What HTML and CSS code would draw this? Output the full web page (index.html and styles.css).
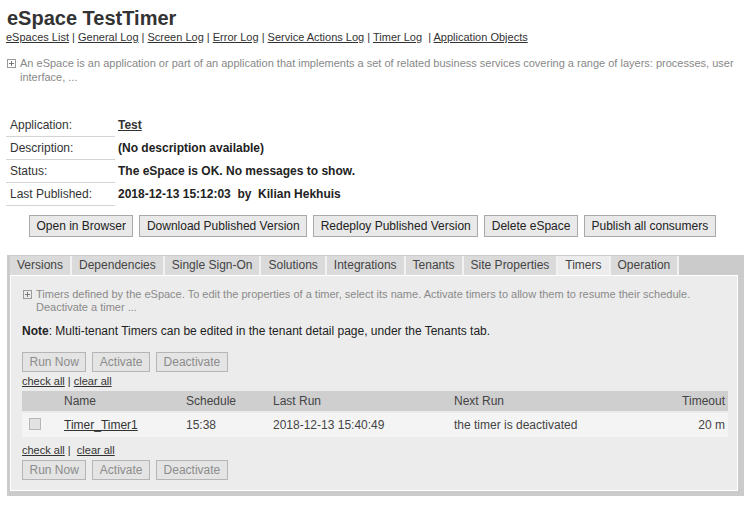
FILE: index.html
```html
<!DOCTYPE html>
<html>
<head>
<meta charset="utf-8">
<title>eSpace TestTimer</title>
<link rel="stylesheet" href="styles.css">
</head>
<body>
<h1 class="title">eSpace TestTimer</h1>
<div class="navlinks"><a href="#">eSpaces List</a> | <a href="#">General Log</a> | <a href="#">Screen Log</a> | <a href="#">Error Log</a> | <a href="#">Service Actions Log</a> | <a href="#">Timer Log</a> &nbsp;| <a href="#">Application Objects</a></div>
<div class="desc">
  <svg class="plus" width="9" height="9" viewBox="0 0 9 9"><rect x="0.5" y="0.5" width="8" height="8" fill="none" stroke="#9a9a9a"/><path d="M2 4.5h5M4.5 2v5" stroke="#777"/></svg>
  <span class="desc-text">An eSpace is an application or part of an application that implements a set of related business services covering a range of layers: processes, user interface, ...</span>
</div>

<div class="info">
  <div class="info-label">Application:</div><div class="info-value"><a href="#">Test</a></div>
  <div class="info-label">Description:</div><div class="info-value">(No description available)</div>
  <div class="info-label">Status:</div><div class="info-value">The eSpace is OK. No messages to show.</div>
  <div class="info-label">Last Published:</div><div class="info-value">2018-12-13 15:12:03 &nbsp;by &nbsp;Kilian Hekhuis</div>
</div>

<div class="actions">
  <button class="btn">Open in Browser</button>
  <button class="btn">Download Published Version</button>
  <button class="btn">Redeploy Published Version</button>
  <button class="btn">Delete eSpace</button>
  <button class="btn">Publish all consumers</button>
</div>

<div class="panel">
  <div class="tabbar">
    <div class="tab">Versions</div>
    <div class="tab">Dependencies</div>
    <div class="tab">Single Sign-On</div>
    <div class="tab">Solutions</div>
    <div class="tab">Integrations</div>
    <div class="tab">Tenants</div>
    <div class="tab">Site Properties</div>
    <div class="tab active">Timers</div>
    <div class="tab">Operation</div>
  </div>
  <div class="tab-content">
    <div class="hint">
      <svg class="plus" width="9" height="9" viewBox="0 0 9 9"><rect x="0.5" y="0.5" width="8" height="8" fill="none" stroke="#9a9a9a"/><path d="M2 4.5h5M4.5 2v5" stroke="#777"/></svg>
      <span class="hint-text">Timers defined by the eSpace. To edit the properties of a timer, select its name. Activate timers to allow them to resume their schedule. Deactivate a timer ...</span>
    </div>
    <div class="note"><b>Note</b>: Multi-tenant Timers can be edited in the tenant detail page, under the Tenants tab.</div>
    <div class="small-actions first">
      <button class="btn-dis" disabled>Run Now</button>
      <button class="btn-dis" disabled>Activate</button>
      <button class="btn-dis" disabled>Deactivate</button>
    </div>
    <div class="checks"><a href="#">check all</a> | <a href="#">clear all</a></div>
    <div class="grid head">
      <div class="cell"></div>
      <div class="cell">Name</div>
      <div class="cell">Schedule</div>
      <div class="cell">Last Run</div>
      <div class="cell">Next Run</div>
      <div class="cell right">Timeout</div>
    </div>
    <div class="grid row">
      <div class="cell"><span class="chk"></span></div>
      <div class="cell"><a href="#">Timer_Timer1</a></div>
      <div class="cell">15:38</div>
      <div class="cell">2018-12-13 15:40:49</div>
      <div class="cell">the timer is deactivated</div>
      <div class="cell right">20 m</div>
    </div>
    <div class="checks second"><a href="#">check all</a> | &nbsp;<a href="#">clear all</a></div>
    <div class="small-actions">
      <button class="btn-dis" disabled>Run Now</button>
      <button class="btn-dis" disabled>Activate</button>
      <button class="btn-dis" disabled>Deactivate</button>
    </div>
  </div>
</div>
</body>
</html>
```

FILE: styles.css
```css
body {
  margin: 0;
  font-family: "Liberation Sans", Arial, sans-serif;
  color: #333;
  background: #fff;
}

a {
  color: #333;
  text-decoration: underline;
}

.title {
  margin: 0;
  padding: 6px 0 0 7px;
  font-size: 20px;
  line-height: 24px;
  font-weight: bold;
  color: #333;
}

.navlinks {
  margin-top: 1px;
  padding-left: 6px;
  font-size: 11px;
  line-height: 13px;
  color: #333;
}

.desc {
  display: flex;
  align-items: flex-start;
  gap: 4px;
  margin-top: 12px;
  padding-left: 7px;
  font-size: 11px;
  line-height: 14px;
  color: #888;
}

.plus {
  flex: none;
  margin-top: 3px;
}

.desc-text {
  max-width: 720px;
}

.info {
  display: grid;
  grid-template-columns: 109px auto;
  justify-content: start;
  margin-top: 30px;
  padding-left: 6px;
  font-size: 12px;
}

.info-label {
  padding-left: 4px;
  line-height: 22px;
  border-bottom: 1px solid #d4d4d4;
  color: #333;
}

.info-value {
  padding-left: 3px;
  line-height: 22px;
  font-weight: bold;
  color: #222;
}

.actions {
  display: flex;
  gap: 6px;
  margin-top: 9px;
  padding-left: 29px;
}

.btn {
  height: 22px;
  padding: 0 6.5px;
  font-family: "Liberation Sans", Arial, sans-serif;
  font-size: 12px;
  color: #222;
  background: #e9e9e9;
  border: 1px solid #a9a9a9;
  border-radius: 0;
}

.panel {
  margin: 18px 12px 0 7px;
  padding: 1px 6px 5px 3px;
  background: #cbcbcc;
}

.tabbar {
  display: flex;
  height: 19px;
}

.tab {
  padding: 0 7px;
  font-size: 12px;
  line-height: 19px;
  color: #444;
  background: #dadada;
  border-right: 2px solid #f1f1f1;
}

.tab.active {
  background: #ececec;
  color: #444;
}

.tab-content {
  background: #ececec;
  border: 1px solid #fff;
  padding: 12px 9px 10px 11px;
}

.hint {
  display: flex;
  align-items: flex-start;
  gap: 4px;
  padding-left: 1px;
  font-size: 11px;
  line-height: 13px;
  color: #8a8a8a;
}

.hint .plus {
  margin-top: 2px;
}

.hint-text {
  max-width: 690px;
}

.note {
  margin-top: 10px;
  font-size: 12px;
  line-height: 14px;
  color: #222;
}

.small-actions {
  display: flex;
  gap: 6px;
  margin-top: 3px;
}

.small-actions.first {
  margin-top: 14px;
}

.btn-dis {
  height: 20px;
  padding: 0 6.5px;
  font-family: "Liberation Sans", Arial, sans-serif;
  font-size: 12px;
  color: #8c8c8c;
  background: #e4e4e4;
  border: 1px solid #b5b5b5;
  border-radius: 0;
}

.checks {
  margin-top: 3px;
  font-size: 11px;
  line-height: 13px;
  color: #333;
}

.checks.second {
  margin-top: 7px;
}

.grid {
  display: grid;
  grid-template-columns: 38px 122px 87px 181px 1fr 80px;
  font-size: 12px;
  color: #444;
}

.head {
  margin-top: 3px;
  height: 20px;
  line-height: 20px;
  background: #cfcfd0;
}

.row {
  margin-top: 2px;
  height: 24px;
  line-height: 24px;
  background: #f4f4f4;
}

.cell {
  padding: 0 4px;
  white-space: nowrap;
}

.cell.right {
  text-align: right;
  padding-right: 3px;
}

.chk {
  display: inline-block;
  width: 10px;
  height: 10px;
  margin-left: 3px;
  vertical-align: -1px;
  border: 1px solid #b8b8b8;
  background: #e2e2e2;
}
```
